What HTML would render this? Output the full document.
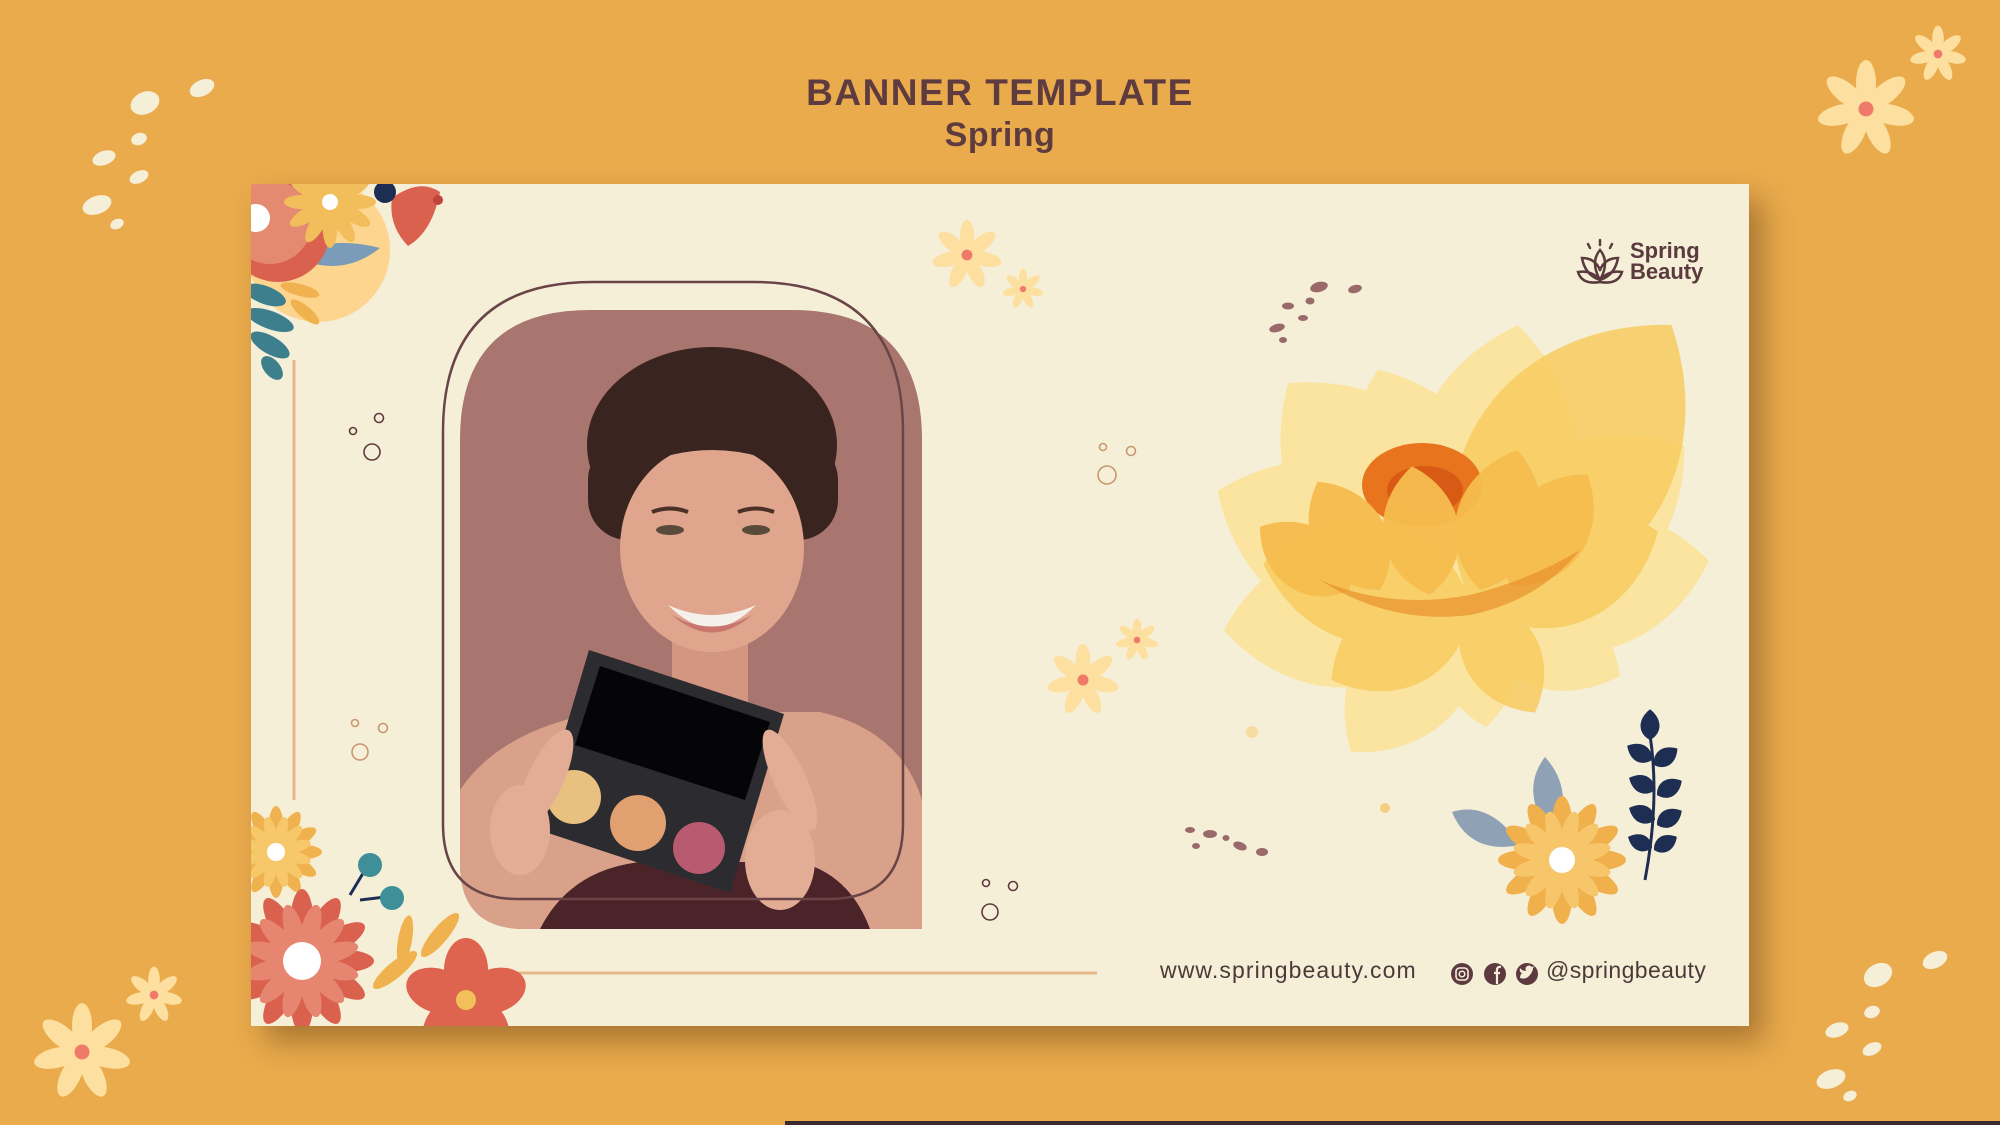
<!DOCTYPE html>
<html><head><meta charset="utf-8"><style>
html,body{margin:0;padding:0}
body{width:2000px;height:1125px;background:#eaab4c;position:relative;overflow:hidden;font-family:"Liberation Sans",sans-serif}
.card{position:absolute;left:251px;top:184px;width:1498px;height:842px;background:#f6efd8;box-shadow:14px 16px 28px rgba(90,55,20,.45)}
svg.main{position:absolute;left:0;top:0}
.t1{position:absolute;left:0;width:2000px;top:72px;text-align:center;font-weight:bold;font-size:37px;color:#5e3b3f;letter-spacing:1.5px}
.t2{position:absolute;left:0;width:2000px;top:116px;text-align:center;font-size:34px;color:#5e3b3f;font-weight:bold;letter-spacing:.5px}
.logo{position:absolute;left:1630px;top:240px;font-size:22px;line-height:21px;color:#5a3a3e;font-weight:bold}
.url{position:absolute;left:1160px;top:957px;font-size:23px;color:#4a3a3a;letter-spacing:1.1px}
.handle{position:absolute;left:1546px;top:957px;font-size:23px;color:#4a3a3a;letter-spacing:.4px}
.bar{position:absolute;left:785px;top:1121px;width:1215px;height:4px;background:#3a2a30}
</style></head><body>
<div class="card"></div>
<svg class="main" width="2000" height="1125" viewBox="0 0 2000 1125">
<defs>
<g id="p7">
 <ellipse cx="0" cy="-0.52" rx="0.2" ry="0.46"/>
 <ellipse cx="0" cy="-0.52" rx="0.2" ry="0.46" transform="rotate(51.4)"/>
 <ellipse cx="0" cy="-0.52" rx="0.2" ry="0.46" transform="rotate(102.8)"/>
 <ellipse cx="0" cy="-0.52" rx="0.2" ry="0.46" transform="rotate(154.3)"/>
 <ellipse cx="0" cy="-0.52" rx="0.2" ry="0.46" transform="rotate(205.7)"/>
 <ellipse cx="0" cy="-0.52" rx="0.2" ry="0.46" transform="rotate(257.1)"/>
 <ellipse cx="0" cy="-0.52" rx="0.2" ry="0.46" transform="rotate(308.6)"/>
</g>
<g id="d7"><g fill="#fde0a0"><use href="#p7"/></g><circle r="0.15" fill="#f07a6a"/></g>
<g id="p12">
 <ellipse cx="0" cy="-0.55" rx="0.16" ry="0.45"/>
 <ellipse cx="0" cy="-0.55" rx="0.16" ry="0.45" transform="rotate(30)"/>
 <ellipse cx="0" cy="-0.55" rx="0.16" ry="0.45" transform="rotate(60)"/>
 <ellipse cx="0" cy="-0.55" rx="0.16" ry="0.45" transform="rotate(90)"/>
 <ellipse cx="0" cy="-0.55" rx="0.16" ry="0.45" transform="rotate(120)"/>
 <ellipse cx="0" cy="-0.55" rx="0.16" ry="0.45" transform="rotate(150)"/>
 <ellipse cx="0" cy="-0.55" rx="0.16" ry="0.45" transform="rotate(180)"/>
 <ellipse cx="0" cy="-0.55" rx="0.16" ry="0.45" transform="rotate(210)"/>
 <ellipse cx="0" cy="-0.55" rx="0.16" ry="0.45" transform="rotate(240)"/>
 <ellipse cx="0" cy="-0.55" rx="0.16" ry="0.45" transform="rotate(270)"/>
 <ellipse cx="0" cy="-0.55" rx="0.16" ry="0.45" transform="rotate(300)"/>
 <ellipse cx="0" cy="-0.55" rx="0.16" ry="0.45" transform="rotate(330)"/>
</g>
<path id="pt" d="M0 0 C38 -22 40 -72 0 -100 C-40 -72 -38 -22 0 0Z"/>
<path id="lf" d="M0 0 C8 -4 10 -14 0 -22 C-10 -14 -8 -4 0 0Z"/>
<clipPath id="ph"><path d="M460 929 L460 440 Q460 310 590 310 L792 310 Q922 310 922 440 L922 929 L525 929 Q460 929 460 864Z"/></clipPath>
<clipPath id="cardc"><rect x="251" y="184" width="1498" height="842"/></clipPath>
</defs>

<g fill="#f6efd8">
<ellipse cx="145" cy="103" rx="15" ry="11" transform="rotate(-25 145 103)"/>
<ellipse cx="202" cy="88" rx="13" ry="8" transform="rotate(-25 202 88)"/>
<ellipse cx="139" cy="139" rx="8" ry="6" transform="rotate(-20 139 139)"/>
<ellipse cx="104" cy="158" rx="12" ry="7" transform="rotate(-20 104 158)"/>
<ellipse cx="139" cy="177" rx="10" ry="6" transform="rotate(-25 139 177)"/>
<ellipse cx="97" cy="205" rx="15" ry="9" transform="rotate(-20 97 205)"/>
<ellipse cx="117" cy="224" rx="7" ry="5" transform="rotate(-25 117 224)"/>
<ellipse cx="1878" cy="975" rx="15" ry="11" transform="rotate(-30 1878 975)"/>
<ellipse cx="1935" cy="960" rx="13" ry="8" transform="rotate(-25 1935 960)"/>
<ellipse cx="1872" cy="1012" rx="8" ry="6" transform="rotate(-20 1872 1012)"/>
<ellipse cx="1837" cy="1030" rx="12" ry="7" transform="rotate(-20 1837 1030)"/>
<ellipse cx="1872" cy="1049" rx="10" ry="6" transform="rotate(-25 1872 1049)"/>
<ellipse cx="1831" cy="1079" rx="15" ry="9" transform="rotate(-20 1831 1079)"/>
<ellipse cx="1850" cy="1096" rx="7" ry="5" transform="rotate(-25 1850 1096)"/>
</g>
<use href="#d7" transform="translate(1866 109) scale(50)"/>
<use href="#d7" transform="translate(1938 54) scale(29)"/>
<use href="#d7" transform="translate(82 1052) scale(50)"/>
<use href="#d7" transform="translate(154 995) scale(29)"/>

<g clip-path="url(#cardc)">
<line x1="294" y1="360" x2="294" y2="800" stroke="#e6b88a" stroke-width="3"/>
<line x1="480" y1="973" x2="1097" y2="973" stroke="#e6b88a" stroke-width="3"/>

<use href="#d7" transform="translate(967 255) scale(36)"/>
<use href="#d7" transform="translate(1023 289) scale(21)"/>
<use href="#d7" transform="translate(1083 680) scale(37)"/>
<use href="#d7" transform="translate(1137 640) scale(22)"/>

<g fill="none" stroke="#5e3b3f" stroke-width="1.6">
<circle cx="353" cy="431" r="3.5"/><circle cx="379" cy="418" r="4.5"/><circle cx="372" cy="452" r="8"/>
<circle cx="986" cy="883" r="3.5"/><circle cx="1013" cy="886" r="4.5"/><circle cx="990" cy="912" r="8"/>
</g>
<g fill="none" stroke="#c9986f" stroke-width="1.6">
<circle cx="355" cy="723" r="3.5"/><circle cx="383" cy="728" r="4.5"/><circle cx="360" cy="752" r="8"/>
<circle cx="1103" cy="447" r="3.5"/><circle cx="1131" cy="451" r="4.5"/><circle cx="1107" cy="475" r="9"/>
</g>
<g fill="#9a6a6a">
<ellipse cx="1319" cy="287" rx="9" ry="5" transform="rotate(-15 1319 287)"/>
<ellipse cx="1355" cy="289" rx="7" ry="4" transform="rotate(-15 1355 289)"/>
<ellipse cx="1288" cy="306" rx="6" ry="3.5"/>
<ellipse cx="1310" cy="301" rx="4.5" ry="3.5"/>
<ellipse cx="1303" cy="318" rx="5" ry="3"/>
<ellipse cx="1277" cy="328" rx="8" ry="4" transform="rotate(-15 1277 328)"/>
<ellipse cx="1283" cy="340" rx="4" ry="3"/>
<ellipse cx="1190" cy="830" rx="5" ry="3"/>
<ellipse cx="1210" cy="834" rx="7" ry="4"/>
<ellipse cx="1226" cy="838" rx="3.5" ry="3"/>
<ellipse cx="1196" cy="846" rx="4" ry="3"/>
<ellipse cx="1240" cy="846" rx="7" ry="4" transform="rotate(20 1240 846)"/>
<ellipse cx="1262" cy="852" rx="6" ry="4"/>
</g>

<g transform="translate(1470 600)">
<g fill="#fbe39a" opacity="0.9">
<use href="#pt" transform="rotate(-66.6) scale(2.75)"/>
<use href="#pt" transform="rotate(-97) scale(2.48)"/>
<use href="#pt" transform="rotate(-142) scale(1.93)"/>
<use href="#pt" transform="rotate(-40) scale(2.83)"/>
<use href="#pt" transform="rotate(-21.8) scale(2.48)"/>
<use href="#pt" transform="rotate(9.9) scale(2.79)"/>
<use href="#pt" transform="rotate(54.3) scale(2.64)"/>
<use href="#pt" transform="rotate(80.7) scale(2.42)"/>
<use href="#pt" transform="rotate(116.9) scale(1.68)"/>
<use href="#pt" transform="rotate(172.8) scale(1.28)"/>
</g>
<g fill="#f8cc60" opacity="0.85">
<use href="#pt" transform="rotate(36.2) scale(3.41)"/>
<use href="#pt" transform="rotate(-80) scale(2.1)"/>
<use href="#pt" transform="rotate(-120) scale(1.6)"/>
<use href="#pt" transform="rotate(70) scale(2.0)"/>
<use href="#pt" transform="rotate(150) scale(1.3)"/>
</g>
<ellipse cx="-48" cy="-115" rx="60" ry="42" fill="#e8741e"/>
<ellipse cx="-45" cy="-110" rx="38" ry="24" fill="#d85a14"/>
<g fill="#f6bd4e" opacity="0.95">
<use href="#pt" transform="translate(-90 -10) rotate(-30) scale(1.25)"/>
<use href="#pt" transform="translate(-40 -5) rotate(-8) scale(1.3)"/>
<use href="#pt" transform="translate(10 -10) rotate(15) scale(1.45)"/>
<use href="#pt" transform="translate(40 -15) rotate(35) scale(1.35)"/>
<use href="#pt" transform="translate(-120 -10) rotate(-55) scale(1.1)"/>
</g>
<path d="M-150 -20 Q-80 10 0 -5 Q60 -20 110 -50 Q70 0 0 15 Q-80 25 -150 -20Z" fill="#e8902c" opacity="0.7"/>
</g>
<circle cx="1252" cy="732" r="6" fill="#f6dca0"/>
<circle cx="1385" cy="808" r="5" fill="#f6cf80"/>

<g fill="#8ea1b5">
<path d="M1520 845 Q1490 800 1452 812 Q1470 855 1520 845Z"/>
<path d="M1548 830 Q1520 790 1545 757 Q1575 790 1555 835Z"/>
</g>
<g stroke="#1e2d52" stroke-width="3" fill="none"><path d="M1645 880 Q1660 800 1650 735"/></g>
<g fill="#1e2d52">
<use href="#lf" transform="translate(1650 740) scale(1.4)"/>
<use href="#lf" transform="translate(1652 760) rotate(-60) scale(1.3)"/>
<use href="#lf" transform="translate(1654 765) rotate(55) scale(1.3)"/>
<use href="#lf" transform="translate(1655 790) rotate(-65) scale(1.3)"/>
<use href="#lf" transform="translate(1657 795) rotate(60) scale(1.3)"/>
<use href="#lf" transform="translate(1655 820) rotate(-65) scale(1.3)"/>
<use href="#lf" transform="translate(1657 825) rotate(60) scale(1.3)"/>
<use href="#lf" transform="translate(1652 848) rotate(-65) scale(1.2)"/>
<use href="#lf" transform="translate(1654 850) rotate(60) scale(1.2)"/>
</g>
<g transform="translate(1562 860)">
<g fill="#f0b04c"><use href="#p12" transform="scale(64)"/></g>
<g fill="#f7c66a"><use href="#p12" transform="rotate(15) scale(50)"/></g>
<circle r="13" fill="#fff"/>
</g>

<circle cx="318" cy="250" r="72" fill="#fdd58e"/>
<path d="M290 255 Q330 235 380 248 Q340 280 290 255Z" fill="#7b9cb8"/>
<g fill="#3e7f8e">
<ellipse cx="265" cy="295" rx="22" ry="9" transform="rotate(20 265 295)"/>
<ellipse cx="270" cy="320" rx="25" ry="9" transform="rotate(20 270 320)"/>
<ellipse cx="270" cy="345" rx="22" ry="9" transform="rotate(30 270 345)"/>
<ellipse cx="272" cy="368" rx="14" ry="8" transform="rotate(50 272 368)"/>
</g>
<g fill="#f0b24e">
<ellipse cx="300" cy="290" rx="20" ry="6" transform="rotate(15 300 290)"/>
<ellipse cx="305" cy="312" rx="18" ry="6" transform="rotate(40 305 312)"/>
</g>
<circle cx="278" cy="230" r="52" fill="#d9614e"/>
<circle cx="270" cy="222" r="42" fill="#e48a70"/>
<circle cx="256" cy="218" r="14" fill="#fff"/>
<g transform="translate(330 202)"><g fill="#f2be5c"><use href="#p12" transform="scale(46)"/></g><circle r="8" fill="#fff"/></g>
<path d="M392 198 Q420 178 440 192 Q432 232 408 246 Q388 225 392 198Z" fill="#d9614e"/>
<circle cx="385" cy="192" r="11" fill="#1e2d52"/>
<circle cx="438" cy="200" r="5" fill="#c0443c"/>

<g fill="#f0b24e">
<ellipse cx="395" cy="970" rx="28" ry="8" transform="rotate(-40 395 970)"/>
<ellipse cx="440" cy="935" rx="28" ry="8" transform="rotate(-50 440 935)"/>
<ellipse cx="405" cy="940" rx="25" ry="7" transform="rotate(-80 405 940)"/>
</g>
<g stroke="#1e2d52" stroke-width="3"><line x1="350" y1="895" x2="365" y2="870"/><line x1="360" y1="900" x2="385" y2="897"/></g>
<g fill="#3e8f98"><circle cx="370" cy="865" r="12"/><circle cx="392" cy="898" r="12"/></g>
<g transform="translate(276 852)"><g fill="#f0b24e"><use href="#p12" transform="scale(46)"/></g><g fill="#f6c86a"><use href="#p12" transform="rotate(15) scale(36)"/></g><circle r="9" fill="#fff"/></g>
<g transform="translate(302 961)">
<g fill="#d9614e"><use href="#p12" transform="scale(72)"/></g>
<g fill="#e68670"><use href="#p12" transform="rotate(15) scale(58)"/></g>
<circle r="19" fill="#fff"/>
</g>
<g transform="translate(466 1000)" fill="#de6450">
<ellipse cx="0" cy="-30" rx="22" ry="32"/>
<ellipse cx="0" cy="-30" rx="22" ry="32" transform="rotate(72)"/>
<ellipse cx="0" cy="-30" rx="22" ry="32" transform="rotate(144)"/>
<ellipse cx="0" cy="-30" rx="22" ry="32" transform="rotate(216)"/>
<ellipse cx="0" cy="-30" rx="22" ry="32" transform="rotate(288)"/>
<circle r="10" fill="#f2c05a"/>
</g>

<g clip-path="url(#ph)">
<rect x="460" y="305" width="462" height="624" fill="#a9756f"/>
<path d="M460 929 L460 790 Q500 730 600 712 L820 712 Q900 730 922 800 L922 929Z" fill="#d9a18a"/>
<path d="M540 929 Q570 870 640 862 L800 862 Q850 875 870 929Z" fill="#4a2428"/>
<rect x="672" y="600" width="76" height="120" fill="#d39680"/>
<ellipse cx="712" cy="445" rx="125" ry="98" fill="#3a2420"/>
<rect x="588" y="440" width="250" height="100" rx="40" fill="#3a2420"/>
<ellipse cx="712" cy="548" rx="92" ry="104" fill="#dfa58d"/>
<path d="M630 470 Q712 430 795 470 L795 450 Q712 405 630 455Z" fill="#3a2420"/>
<path d="M652 512 Q670 505 688 512" stroke="#4a3026" stroke-width="4" fill="none"/>
<path d="M738 512 Q756 505 774 512" stroke="#4a3026" stroke-width="4" fill="none"/>
<ellipse cx="670" cy="530" rx="14" ry="5" fill="#5a4a3a"/>
<ellipse cx="756" cy="530" rx="14" ry="5" fill="#5a4a3a"/>
<path d="M668 605 Q712 625 756 605 Q712 650 668 605Z" fill="#f6f0ea"/>
<path d="M672 615 Q712 650 752 615 Q712 638 672 615Z" fill="#c9776e"/>
<path d="M589 650 L784 714 L730 893 L536 829Z" fill="#2c2c30"/>
<path d="M600 666 L770 722 L745 800 L575 745Z" fill="#050508"/>
<circle cx="574" cy="797" r="27" fill="#e8c080"/>
<circle cx="638" cy="823" r="28" fill="#e0a070"/>
<circle cx="699" cy="848" r="26" fill="#b85a70"/>
<g fill="#e3ad95">
<ellipse cx="545" cy="780" rx="18" ry="55" transform="rotate(25 545 780)"/>
<ellipse cx="520" cy="830" rx="30" ry="45"/>
<ellipse cx="790" cy="780" rx="16" ry="55" transform="rotate(-25 790 780)"/>
<ellipse cx="780" cy="860" rx="35" ry="50"/>
</g>
</g>
<path d="M443 432 Q443 282 593 282 L753 282 Q903 282 903 432 L903 824 Q903 899 828 899 L518 899 Q443 899 443 824Z" fill="none" stroke="#6a4548" stroke-width="2.5"/>
</g>

<g fill="none" stroke="#5a3a3e" stroke-width="2.5" stroke-linecap="round">
<path d="M1600 280 Q1590 262 1600 250 Q1610 262 1600 280Z"/>
<path d="M1600 280 Q1585 275 1582 258 Q1595 258 1600 270"/>
<path d="M1600 280 Q1615 275 1618 258 Q1605 258 1600 270"/>
<path d="M1600 282 Q1582 285 1578 272 Q1590 270 1598 278"/>
<path d="M1600 282 Q1618 285 1622 272 Q1610 270 1602 278"/>
<line x1="1600" y1="240" x2="1600" y2="245"/><line x1="1588" y1="244" x2="1590" y2="248"/><line x1="1612" y1="244" x2="1610" y2="248"/>
</g>
<g fill="#5e3a40">
<circle cx="1462" cy="974" r="11"/><circle cx="1495" cy="974" r="11"/><circle cx="1527" cy="974" r="11"/>
</g>
<rect x="1456" y="968" width="12" height="12" rx="3.5" fill="none" stroke="#f6efd8" stroke-width="1.6"/>
<circle cx="1462" cy="974" r="2.8" fill="none" stroke="#f6efd8" stroke-width="1.5"/>
<path d="M1497 984 L1497 973 L1500 973 M1494 973 L1500 973 M1497 973 Q1496 966 1501 967" fill="none" stroke="#f6efd8" stroke-width="2.2"/>
<path d="M1520 978 Q1526 980 1530 975 Q1533 971 1533 968 L1535 966 L1532 967 Q1529 964 1526 967 Q1525 969 1526 971 Q1522 971 1520 968 Q1519 972 1522 973 Q1520 975 1520 978Z" fill="#f6efd8"/>
</svg>
<div class="t1">BANNER TEMPLATE</div>
<div class="t2">Spring</div>
<div class="logo">Spring<br>Beauty</div>
<div class="url">www.springbeauty.com</div>
<div class="handle">@springbeauty</div>
<div class="bar"></div>
</body></html>
